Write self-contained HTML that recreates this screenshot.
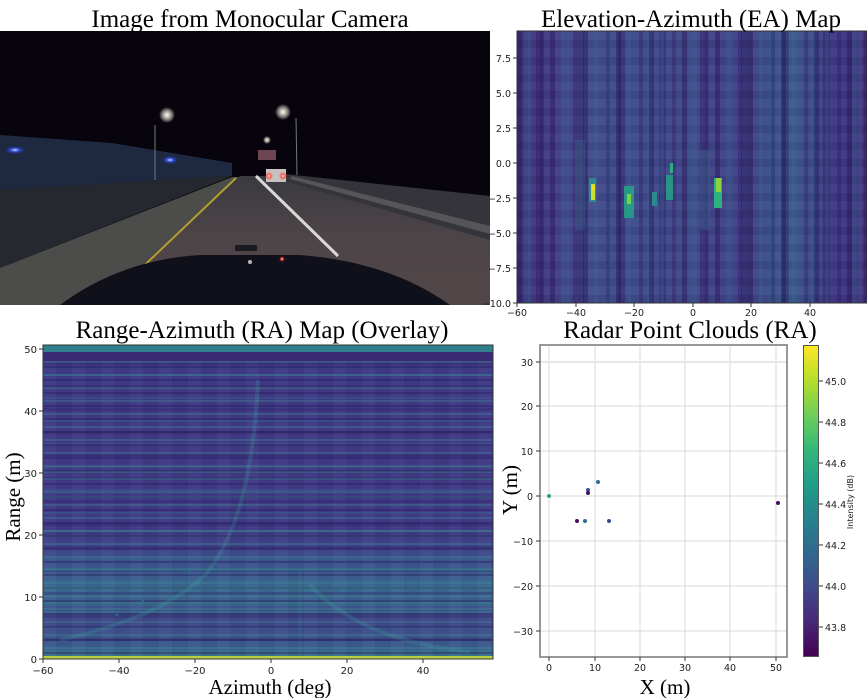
<!DOCTYPE html>
<html><head><meta charset="utf-8"><style>
html,body{margin:0;padding:0;background:#fff;}
body{width:867px;height:698px;position:relative;overflow:hidden;font-family:"DejaVu Sans",sans-serif;}
.abs{position:absolute;}
#ea{left:517px;top:31px;width:350px;height:272px;
background:
repeating-linear-gradient(90deg,rgba(30,10,70,.35) 0 5px,transparent 5px 11px,rgba(60,110,150,.25) 11px 15px,transparent 15px 23px,rgba(40,20,90,.3) 23px 27px,transparent 27px 33px),
repeating-linear-gradient(90deg,transparent 0 7px,rgba(50,100,140,.3) 7px 12px,transparent 12px 19px,rgba(35,15,80,.3) 19px 26px,transparent 26px 41px),
repeating-linear-gradient(180deg,rgba(255,255,255,.03) 0 9px,rgba(0,0,0,.04) 9px 17px),
linear-gradient(90deg,#40307e 0%,#434a8c 20%,#3d4a8b 35%,#42468b 50%,#3f3e86 65%,#3a5a8e 78%,#3f3985 90%,#432e7c 100%);}
#ra{left:43px;top:345px;width:450px;height:314px;
background:
linear-gradient(180deg,#2f7f8c 0 7px,#3a2a74 7px 16px,transparent 16px),
repeating-linear-gradient(180deg,transparent 0 3px,rgba(60,140,150,.35) 3px 5px,transparent 5px 8px,rgba(35,20,85,.35) 8px 10px,transparent 10px 13px),
repeating-linear-gradient(180deg,transparent 0 6px,rgba(45,120,145,.3) 6px 8px,transparent 8px 17px,rgba(40,25,95,.3) 17px 20px,transparent 20px 23px),
repeating-linear-gradient(90deg,rgba(255,255,255,.02) 0 13px,rgba(0,0,0,.04) 13px 29px),
linear-gradient(180deg,#3f3a86 0%,#413a86 60%,#3d5590 70%,#3a6a90 78%,#40478a 88%,#3b5c8f 96%,#3a7a8c 100%);}
#cb{left:803px;top:345px;width:16px;height:312px;border:1px solid #555;box-sizing:border-box;
background:linear-gradient(0deg,#440154,#482878,#3e4a89,#31688e,#26828e,#1f9e89,#35b779,#6ece58,#b5de2b,#fde725);}
.t{font-family:"Liberation Serif",serif;fill:#000;}
</style></head><body>
<svg class="abs" style="left:0;top:31px" width="490" height="274" viewBox="0 31 490 274">
<defs>
<radialGradient id="glow"><stop offset="0" stop-color="#fff"/><stop offset=".4" stop-color="#ddd8c0" stop-opacity=".8"/><stop offset="1" stop-color="#fff" stop-opacity="0"/></radialGradient>
<radialGradient id="bglow"><stop offset="0" stop-color="#cfe0ff"/><stop offset=".5" stop-color="#3050ff" stop-opacity=".7"/><stop offset="1" stop-color="#2040ff" stop-opacity="0"/></radialGradient>
<radialGradient id="rglow"><stop offset="0" stop-color="#fff0e0"/><stop offset=".5" stop-color="#ff4030" stop-opacity=".7"/><stop offset="1" stop-color="#f00" stop-opacity="0"/></radialGradient>
<linearGradient id="road" x1="0" y1="0" x2="0" y2="1"><stop offset="0" stop-color="#3a3a40"/><stop offset=".5" stop-color="#4e4548"/><stop offset="1" stop-color="#514648"/></linearGradient>
</defs>
<rect x="0" y="31" width="490" height="274" fill="#07040e"/>
<polygon points="0,135 112,143 232,163 232,176 0,190" fill="#1e2940"/>
<polygon points="0,190 232,176 0,268" fill="#25282e"/>
<polygon points="0,268 232,177 240,177 95,305 0,305" fill="#4c4c4a"/>
<polygon points="240,176 268,176 490,238 490,305 95,305" fill="url(#road)"/>
<polygon points="285,174 490,196 490,240 280,180" fill="#34343a"/>
<polygon points="292,176 490,226 490,234 290,179" fill="#55555a"/>
<line x1="236" y1="178" x2="108" y2="300" stroke="#b0a030" stroke-width="2"/>
<line x1="256" y1="176" x2="338" y2="256" stroke="#d8d8d8" stroke-width="3"/>
<line x1="155" y1="125" x2="155" y2="180" stroke="#777" stroke-width="1"/>
<line x1="296" y1="118" x2="297" y2="175" stroke="#777" stroke-width="1"/>
<circle cx="167" cy="115" r="8" fill="url(#glow)"/>
<circle cx="283" cy="112" r="8" fill="url(#glow)"/>
<circle cx="267" cy="140" r="4" fill="url(#glow)"/>
<ellipse cx="15" cy="150" rx="10" ry="4" fill="url(#bglow)"/>
<ellipse cx="170" cy="160" rx="8" ry="4" fill="url(#bglow)"/>
<rect x="258" y="150" width="18" height="10" fill="#b07080" opacity=".6"/>
<rect x="266" y="169" width="20" height="13" fill="#c9c0c0"/>
<circle cx="269" cy="176" r="4" fill="url(#rglow)"/>
<circle cx="283" cy="176" r="4" fill="url(#rglow)"/>
<path d="M60 305 Q120 260 200 255 L300 255 Q390 262 450 305 Z" fill="#10101a"/>
<rect x="235" y="245" width="22" height="6" fill="#1a1a22"/>
<circle cx="282" cy="259" r="3" fill="url(#rglow)"/>
<circle cx="250" cy="262" r="2" fill="#fff" opacity=".7"/>
</svg>
<div id="ea" class="abs"></div>
<div id="ra" class="abs"></div>
<div id="cb" class="abs"></div>
<svg class="abs" style="left:0;top:0" width="867" height="698">
<g>
<rect x="589" y="178" width="7" height="24" fill="#2a9a88" opacity=".8"/>
<rect x="591" y="184" width="4" height="16" fill="#c8e030"/>
<rect x="592" y="186" width="3" height="4" fill="#f0e020"/>
<rect x="624" y="186" width="10" height="32" fill="#24a585" opacity=".85"/>
<rect x="627" y="194" width="4" height="10" fill="#7ad04a"/>
<rect x="652" y="192" width="5" height="14" fill="#2a8a8c"/>
<rect x="666" y="175" width="7" height="25" fill="#23a884" opacity=".8"/>
<rect x="670" y="163" width="3" height="10" fill="#28ae80"/>
<rect x="714" y="178" width="8" height="30" fill="#2eb37c"/>
<rect x="716" y="178" width="5" height="14" fill="#8ad444"/>
<rect x="700" y="150" width="10" height="80" fill="#3a7090" opacity=".35"/>
<rect x="575" y="140" width="10" height="90" fill="#3a7090" opacity=".3"/>
</g>
<g fill="none" stroke="#3fb0a0" stroke-opacity=".2" stroke-width="4">
<path d="M258 380 Q252 520 205 575 Q160 618 60 640"/>
<path d="M310 585 Q360 640 470 652"/>
</g>
<path d="M300 570 L300 655" stroke="#3fb0a0" stroke-opacity=".12" stroke-width="3"/>
<g fill="none" stroke="#2fa08a" stroke-opacity=".35" stroke-width="1.5">
<line x1="43" y1="569" x2="493" y2="569"/>
<line x1="43" y1="588" x2="493" y2="588"/>
<line x1="43" y1="603" x2="493" y2="603"/>
<line x1="43" y1="612" x2="493" y2="612"/>
<line x1="43" y1="531" x2="493" y2="531"/>
<line x1="43" y1="497" x2="493" y2="497"/>
<line x1="43" y1="472" x2="493" y2="472"/>
</g>
<rect x="43" y="656" width="450" height="3" fill="#b8d040"/>
<g fill="#2a6a80">
<circle cx="117" cy="615" r="1.5"/><circle cx="143" cy="601" r="1.5"/><circle cx="189" cy="571" r="1.5"/>
<circle cx="293" cy="605" r="1.5"/><circle cx="311" cy="605" r="1.5"/><circle cx="336" cy="590" r="1.5"/>
</g>
<rect x="43" y="345" width="450" height="314" fill="none" stroke="#333" stroke-width="1"/>
<g stroke="#333">
<line x1="43" y1="659" x2="43" y2="663"/><line x1="119" y1="659" x2="119" y2="663"/><line x1="195" y1="659" x2="195" y2="663"/><line x1="271" y1="659" x2="271" y2="663"/><line x1="347" y1="659" x2="347" y2="663"/><line x1="423" y1="659" x2="423" y2="663"/>
<line x1="39" y1="659" x2="43" y2="659"/><line x1="39" y1="597" x2="43" y2="597"/><line x1="39" y1="535" x2="43" y2="535"/><line x1="39" y1="473" x2="43" y2="473"/><line x1="39" y1="411" x2="43" y2="411"/><line x1="39" y1="349" x2="43" y2="349"/>
</g>
<g font-size="10" fill="#222" text-anchor="middle" font-family="DejaVu Sans">
<text x="43" y="674">−60</text><text x="119" y="674">−40</text><text x="195" y="674">−20</text><text x="271" y="674">0</text><text x="347" y="674">20</text><text x="423" y="674">40</text>
</g>
<g font-size="10" fill="#222" text-anchor="end" font-family="DejaVu Sans">
<text x="37" y="663">0</text><text x="37" y="601">10</text><text x="37" y="539">20</text><text x="37" y="477">30</text><text x="37" y="415">40</text><text x="37" y="353">50</text>
</g>
<rect x="517" y="31" width="350" height="272" fill="none" stroke="#333"/>
<g stroke="#333">
<line x1="517" y1="303" x2="517" y2="307"/><line x1="576" y1="303" x2="576" y2="307"/><line x1="634" y1="303" x2="634" y2="307"/><line x1="693" y1="303" x2="693" y2="307"/><line x1="751" y1="303" x2="751" y2="307"/><line x1="810" y1="303" x2="810" y2="307"/>
<line x1="513" y1="58" x2="517" y2="58"/><line x1="513" y1="93" x2="517" y2="93"/><line x1="513" y1="128" x2="517" y2="128"/><line x1="513" y1="163" x2="517" y2="163"/><line x1="513" y1="198" x2="517" y2="198"/><line x1="513" y1="233" x2="517" y2="233"/><line x1="513" y1="268" x2="517" y2="268"/><line x1="513" y1="303" x2="517" y2="303"/>
</g>
<g font-size="9.5" fill="#222" text-anchor="middle" font-family="DejaVu Sans">
<text x="517" y="316">−60</text><text x="576" y="316">−40</text><text x="634" y="316">−20</text><text x="693" y="316">0</text><text x="751" y="316">20</text><text x="810" y="316">40</text>
</g>
<g font-size="9.5" fill="#222" text-anchor="end" font-family="DejaVu Sans">
<text x="511" y="62">7.5</text><text x="511" y="97">5.0</text><text x="511" y="132">2.5</text><text x="511" y="167">0.0</text><text x="511" y="202">−2.5</text><text x="511" y="237">−5.0</text><text x="511" y="272">−7.5</text><text x="511" y="307">−10.0</text>
</g>
<g stroke="#d8d8d8" stroke-width="1">
<line x1="549" y1="345" x2="549" y2="657"/><line x1="595" y1="345" x2="595" y2="657"/><line x1="640" y1="345" x2="640" y2="657"/><line x1="685" y1="345" x2="685" y2="657"/><line x1="730" y1="345" x2="730" y2="657"/><line x1="776" y1="345" x2="776" y2="657"/>
<line x1="540" y1="406" x2="787" y2="406"/><line x1="540" y1="451" x2="787" y2="451"/><line x1="540" y1="496" x2="787" y2="496"/><line x1="540" y1="541" x2="787" y2="541"/><line x1="540" y1="586" x2="787" y2="586"/><line x1="540" y1="631" x2="787" y2="631"/>
</g>
<line x1="540" y1="362" x2="787" y2="362" stroke="#e8e8e8" stroke-width="2"/>
<rect x="540" y="345" width="247" height="312" fill="none" stroke="#777" stroke-width="1.5"/>
<g stroke="#333">
<line x1="549" y1="657" x2="549" y2="661"/><line x1="595" y1="657" x2="595" y2="661"/><line x1="640" y1="657" x2="640" y2="661"/><line x1="685" y1="657" x2="685" y2="661"/><line x1="730" y1="657" x2="730" y2="661"/><line x1="776" y1="657" x2="776" y2="661"/>
<line x1="536" y1="362" x2="540" y2="362"/><line x1="536" y1="406" x2="540" y2="406"/><line x1="536" y1="451" x2="540" y2="451"/><line x1="536" y1="496" x2="540" y2="496"/><line x1="536" y1="541" x2="540" y2="541"/><line x1="536" y1="586" x2="540" y2="586"/><line x1="536" y1="631" x2="540" y2="631"/>
<line x1="819" y1="381" x2="823" y2="381"/><line x1="819" y1="422" x2="823" y2="422"/><line x1="819" y1="463" x2="823" y2="463"/><line x1="819" y1="504" x2="823" y2="504"/><line x1="819" y1="545" x2="823" y2="545"/><line x1="819" y1="586" x2="823" y2="586"/><line x1="819" y1="627" x2="823" y2="627"/>
</g>
<g font-size="9.5" fill="#222" text-anchor="middle" font-family="DejaVu Sans">
<text x="549" y="671">0</text><text x="595" y="671">10</text><text x="640" y="671">20</text><text x="685" y="671">30</text><text x="730" y="671">40</text><text x="776" y="671">50</text>
</g>
<g font-size="9.5" fill="#222" text-anchor="end" font-family="DejaVu Sans">
<text x="533" y="366">30</text><text x="533" y="410">20</text><text x="533" y="455">10</text><text x="533" y="500">0</text><text x="533" y="545">−10</text><text x="533" y="590">−20</text><text x="533" y="635">−30</text>
</g>
<g font-size="9.5" fill="#222" font-family="DejaVu Sans">
<text x="825" y="385">45.0</text><text x="825" y="426">44.8</text><text x="825" y="467">44.6</text><text x="825" y="508">44.4</text><text x="825" y="549">44.2</text><text x="825" y="590">44.0</text><text x="825" y="631">43.8</text>
</g>
<text x="0" y="0" font-size="8" fill="#222" font-family="DejaVu Sans" text-anchor="middle" transform="translate(853,502) rotate(-90)">Intensity (dB)</text>
<g>
<circle cx="549" cy="496" r="2" fill="#3a9a8e"/>
<circle cx="577" cy="521" r="2" fill="#46105e"/>
<circle cx="585" cy="521" r="2" fill="#2f6f8e"/>
<circle cx="588" cy="490" r="2" fill="#3b528b"/>
<circle cx="588" cy="493" r="2" fill="#46105e"/>
<circle cx="598" cy="482" r="2" fill="#31688e"/>
<circle cx="609" cy="521" r="2" fill="#3b4a89"/>
<circle cx="778" cy="503" r="2" fill="#46105e"/>
</g>
<g class="t" font-size="25" text-anchor="middle">
<text x="250" y="27">Image from Monocular Camera</text>
<text x="691" y="27">Elevation-Azimuth (EA) Map</text>
<text x="262" y="338">Range-Azimuth (RA) Map (Overlay)</text>
<text x="690" y="338">Radar Point Clouds (RA)</text>
</g>
<g class="t" font-size="21" text-anchor="middle">
<text x="270" y="694">Azimuth (deg)</text>
<text x="665" y="694">X (m)</text>
<text transform="translate(20,497) rotate(-90)">Range (m)</text>
<text transform="translate(517,490) rotate(-90)">Y (m)</text>
</g>
</svg>
</body></html>
